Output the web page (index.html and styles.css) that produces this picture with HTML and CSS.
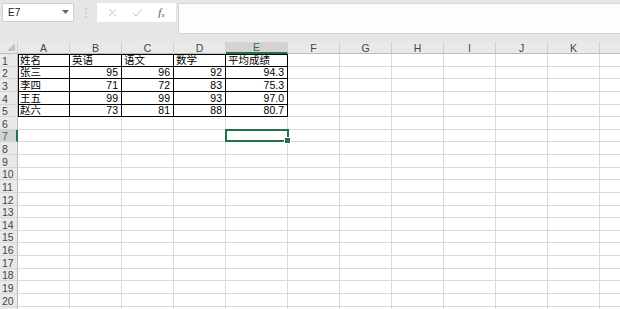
FILE: index.html
```html
<!DOCTYPE html>
<html lang="zh-CN">
<head>
  <meta charset="UTF-8">
  <meta name="viewport" content="width=device-width, initial-scale=1.0">
  <title>Sheet1</title>
  <link rel="stylesheet" href="styles.css">
</head>
<body>
  <div class="toolbar">
    <div class="namebox">
      <span>E7</span>
      <svg class="drop" width="7" height="4" viewBox="0 0 7 4"><path d="M0 0h7L3.5 4z" fill="#666"/></svg>
    </div>
    <div class="grip">
      <svg width="2" height="10" viewBox="0 0 2 10"><circle cx="1" cy="1" r="0.8" fill="#b4b4b4"/><circle cx="1" cy="5" r="0.8" fill="#b4b4b4"/><circle cx="1" cy="9" r="0.8" fill="#b4b4b4"/></svg>
    </div>
    <div class="fx-buttons">
      <svg width="9" height="9" viewBox="0 0 9 9"><path d="M1 1l7 7M8 1l-7 7" stroke="#c4c4c4" stroke-width="1"/></svg>
      <svg width="11" height="9" viewBox="0 0 11 9"><path d="M1 5l3 3 6-7" stroke="#c4c4c4" stroke-width="1" fill="none"/></svg>
      <span class="fx">f<sub>x</sub></span>
    </div>
    <div class="formula"></div>
  </div>

  <table class="sheet">
    <colgroup>
      <col class="c-rh"><col class="c-std"><col class="c-std"><col class="c-std"><col class="c-std"><col class="c-wide">
      <col class="c-std"><col class="c-std"><col class="c-std"><col class="c-std"><col class="c-std"><col class="c-std"><col class="c-std">
    </colgroup>
    <thead>
      <tr>
        <th class="corner"><span class="tri"></span></th>
        <th>A</th><th>B</th><th>C</th><th>D</th><th class="on">E</th><th>F</th><th>G</th><th>H</th><th>I</th><th>J</th><th>K</th><th></th>
      </tr>
    </thead>
    <tbody>
      <tr><th>1</th><td class="bx top lft">姓名</td><td class="bx top">英语</td><td class="bx top">语文</td><td class="bx top">数学</td><td class="bx top">平均成绩</td><td></td><td></td><td></td><td></td><td></td><td></td><td></td></tr>
      <tr><th>2</th><td class="bx lft">张三</td><td class="bx num">95</td><td class="bx num">96</td><td class="bx num">92</td><td class="bx num">94.3</td><td></td><td></td><td></td><td></td><td></td><td></td><td></td></tr>
      <tr><th>3</th><td class="bx lft">李四</td><td class="bx num">71</td><td class="bx num">72</td><td class="bx num">83</td><td class="bx num">75.3</td><td></td><td></td><td></td><td></td><td></td><td></td><td></td></tr>
      <tr><th>4</th><td class="bx lft">王五</td><td class="bx num">99</td><td class="bx num">99</td><td class="bx num">93</td><td class="bx num">97.0</td><td></td><td></td><td></td><td></td><td></td><td></td><td></td></tr>
      <tr><th>5</th><td class="bx lft">赵六</td><td class="bx num">73</td><td class="bx num">81</td><td class="bx num">88</td><td class="bx num">80.7</td><td></td><td></td><td></td><td></td><td></td><td></td><td></td></tr>
      <tr><th>6</th><td></td><td></td><td></td><td></td><td></td><td></td><td></td><td></td><td></td><td></td><td></td><td></td></tr>
      <tr><th class="on">7</th><td></td><td></td><td></td><td></td><td class="active"><div class="sel"></div></td><td></td><td></td><td></td><td></td><td></td><td></td><td></td></tr>
      <tr><th>8</th><td></td><td></td><td></td><td></td><td></td><td></td><td></td><td></td><td></td><td></td><td></td><td></td></tr>
      <tr><th>9</th><td></td><td></td><td></td><td></td><td></td><td></td><td></td><td></td><td></td><td></td><td></td><td></td></tr>
      <tr><th>10</th><td></td><td></td><td></td><td></td><td></td><td></td><td></td><td></td><td></td><td></td><td></td><td></td></tr>
      <tr><th>11</th><td></td><td></td><td></td><td></td><td></td><td></td><td></td><td></td><td></td><td></td><td></td><td></td></tr>
      <tr><th>12</th><td></td><td></td><td></td><td></td><td></td><td></td><td></td><td></td><td></td><td></td><td></td><td></td></tr>
      <tr><th>13</th><td></td><td></td><td></td><td></td><td></td><td></td><td></td><td></td><td></td><td></td><td></td><td></td></tr>
      <tr><th>14</th><td></td><td></td><td></td><td></td><td></td><td></td><td></td><td></td><td></td><td></td><td></td><td></td></tr>
      <tr><th>15</th><td></td><td></td><td></td><td></td><td></td><td></td><td></td><td></td><td></td><td></td><td></td><td></td></tr>
      <tr><th>16</th><td></td><td></td><td></td><td></td><td></td><td></td><td></td><td></td><td></td><td></td><td></td><td></td></tr>
      <tr><th>17</th><td></td><td></td><td></td><td></td><td></td><td></td><td></td><td></td><td></td><td></td><td></td><td></td></tr>
      <tr><th>18</th><td></td><td></td><td></td><td></td><td></td><td></td><td></td><td></td><td></td><td></td><td></td><td></td></tr>
      <tr><th>19</th><td></td><td></td><td></td><td></td><td></td><td></td><td></td><td></td><td></td><td></td><td></td><td></td></tr>
      <tr><th>20</th><td></td><td></td><td></td><td></td><td></td><td></td><td></td><td></td><td></td><td></td><td></td><td></td></tr>
      <tr><th></th><td></td><td></td><td></td><td></td><td></td><td></td><td></td><td></td><td></td><td></td><td></td><td></td></tr>
    </tbody>
  </table>
</body>
</html>
```

FILE: styles.css
```css
* {
  margin: 0;
  padding: 0;
  box-sizing: border-box;
}

body {
  width: 620px;
  height: 309px;
  overflow: hidden;
  background: #fff;
  font-family: "Liberation Sans", "Noto Sans CJK SC", sans-serif;
  color: #000;
}

/* formula bar */
.toolbar {
  display: flex;
  align-items: flex-start;
  height: 42px;
  padding: 3px 0 0 2px;
  background: #e6e6e6;
}

.namebox {
  display: flex;
  justify-content: space-between;
  align-items: center;
  width: 72px;
  height: 19px;
  padding: 0 4px 0 5px;
  background: #fff;
  border: 1px solid #d0d0d0;
  font-size: 10px;
  color: #222;
}

.namebox .drop {
  margin-top: -2px;
}

.grip {
  display: flex;
  justify-content: center;
  align-items: center;
  width: 23px;
  height: 19px;
}

.fx-buttons {
  display: flex;
  justify-content: space-around;
  align-items: center;
  width: 79px;
  height: 19px;
  padding: 0 4px;
  background: #fff;
}

.fx-buttons .fx {
  font-family: "Liberation Serif", serif;
  font-style: italic;
  font-size: 11px;
  color: #555;
}

.fx-buttons .fx sub {
  font-size: 7px;
  vertical-align: -1px;
}

.formula {
  flex: 1;
  height: 31px;
  margin-left: 2px;
  background: #fdfdfd;
  border: 1px solid #d4d4d4;
  border-right: none;
}

/* grid */
.sheet {
  table-layout: fixed;
  width: 652px;
  border-collapse: separate;
  border-spacing: 0;
  font-size: 10.5px;
}

.c-rh { width: 18px; }
.c-std { width: 52px; }
.c-wide { width: 62px; }

.sheet thead tr {
  height: 12px;
}

.sheet tbody tr {
  height: 12.63px;
}

.sheet th {
  font-weight: normal;
  color: #444;
  background: #e9e9e9;
  line-height: 10px;
  font-size: 10.5px;
}

.sheet thead th {
  border-right: 1px solid #cfcfcf;
  border-bottom: 1px solid #bdbdbd;
  vertical-align: bottom;
}

.sheet tbody th {
  text-align: left;
  padding-left: 2px;
  border-right: 1px solid #bdbdbd;
  border-bottom: 1px solid #d6d6d6;
  vertical-align: bottom;
}

.sheet thead th.on {
  background: #d3d3d3;
  color: #217346;
  border-bottom: 2px solid #217346;
}

.sheet tbody th.on {
  background: #d3d3d3;
  color: #217346;
  border-right: 2px solid #217346;
}

.corner {
  position: relative;
}

.corner .tri {
  position: absolute;
  right: 2px;
  bottom: 2px;
  width: 0;
  height: 0;
  border-left: 8px solid transparent;
  border-bottom: 8px solid #c2c2c2;
}

.sheet td {
  padding: 0 2px;
  line-height: 11px;
  vertical-align: bottom;
  white-space: nowrap;
  border-right: 1px solid #dadada;
  border-bottom: 1px solid #dadada;
}

.sheet td.num {
  text-align: right;
  padding-right: 3px;
}

.sheet td.bx {
  border-right-color: #000;
  border-bottom-color: #000;
}

.sheet td.top {
  box-shadow: inset 0 1px 0 #000;
}

.sheet td.lft {
  box-shadow: inset 1px 0 0 #000;
}

.sheet td.top.lft {
  box-shadow: inset 0 1px 0 #000, inset 1px 0 0 #000;
}

.sheet td.active {
  position: relative;
}

.sel {
  position: absolute;
  top: -1px;
  left: -1px;
  right: -2px;
  bottom: -1px;
  border: 2px solid #217346;
}

.sel::after {
  content: "";
  position: absolute;
  right: -4px;
  bottom: -4px;
  width: 5px;
  height: 5px;
  background: #217346;
  border: 1px solid #fff;
}
```
